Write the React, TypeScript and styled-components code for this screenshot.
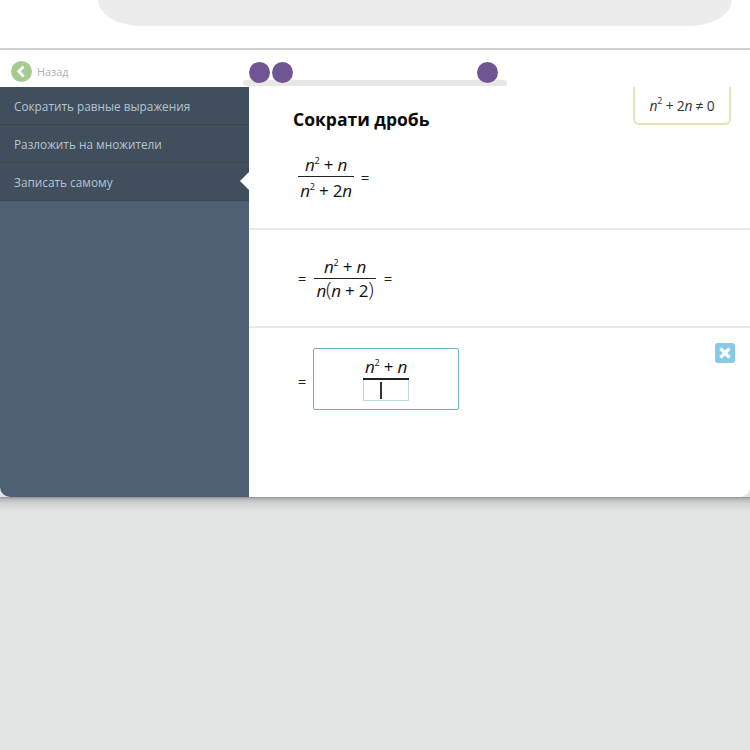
import styled, { createGlobalStyle } from 'styled-components';

const GlobalStyle = createGlobalStyle`
    html, body {
        margin: 0;
        padding: 0;
        background: #e3e5e5;
        font-family: 'Open Sans', 'Liberation Sans', sans-serif;
    }
`;

const Fraction = ({
    top,
    bottom,
    width,
    gap,
}: {
    top: React.ReactNode;
    bottom: React.ReactNode;
    width: number;
    gap: number;
}) => (
    <FractionBox $width={width}>
        <Numerator>{top}</Numerator>
        <Denominator $gap={gap}>{bottom}</Denominator>
    </FractionBox>
);

const NSquared = () => (
    <>
        <Var>n</Var>
        <Sup>2</Sup>
    </>
);

const menuItems = ['Сократить равные выражения', 'Разложить на множители', 'Записать самому'];

const App = () => {
    return (
        <Page>
            <GlobalStyle />
            <Card>
                <TopBar>
                    <Pill />
                </TopBar>
                <NavRow>
                    <BackIcon>
                        <svg width="21" height="21" viewBox="0 0 21 21">
                            <circle cx="10.5" cy="10.5" r="10.5" fill="#a6cb90" />
                            <path d="M12.6 5.6 L7.8 10.5 L12.6 15.4" fill="none" stroke="#fff" strokeWidth="2.8" />
                        </svg>
                    </BackIcon>
                    <BackText>Назад</BackText>
                    <Track>
                        <Dot $left={6} />
                        <Dot $left={29} />
                        <Dot $left={234} />
                    </Track>
                </NavRow>
                <Body>
                    <Sidebar>
                        {menuItems.map((item, i) => (
                            <MenuItem key={item} $active={i === 2}>
                                {item}
                            </MenuItem>
                        ))}
                    </Sidebar>
                    <Content>
                        <HintCard>
                            <NSquared /> + 2<Var>n</Var> ≠ 0
                        </HintCard>
                        <FirstStep>
                            <Title>Сократи дробь</Title>
                            <MathLine>
                                <Fraction
                                    width={56}
                                    gap={3}
                                    top={
                                        <>
                                            <NSquared /> + <Var>n</Var>
                                        </>
                                    }
                                    bottom={
                                        <>
                                            <NSquared /> + 2<Var>n</Var>
                                        </>
                                    }
                                />
                                <Equals>=</Equals>
                            </MathLine>
                        </FirstStep>
                        <SecondStep>
                            <Equals>=</Equals>
                            <Fraction
                                width={62}
                                gap={1}
                                top={
                                    <>
                                        <NSquared /> + <Var>n</Var>
                                    </>
                                }
                                bottom={
                                    <>
                                        <Var>n</Var>
                                        <Paren>(</Paren>
                                        <Var>n</Var> + 2<Paren>)</Paren>
                                    </>
                                }
                            />
                            <Equals>=</Equals>
                        </SecondStep>
                        <ThirdStep>
                            <BoxEquals>=</BoxEquals>
                            <AnswerBox>
                                <AnswerNumerator>
                                    <NSquared /> + <Var>n</Var>
                                </AnswerNumerator>
                                <AnswerInput>
                                    <Caret />
                                </AnswerInput>
                            </AnswerBox>
                            <CloseButton>
                                <svg width="14" height="14" viewBox="0 0 14 14">
                                    <path d="M2.5 2.5 L11.5 11.5 M11.5 2.5 L2.5 11.5" stroke="#fff" strokeWidth="3.2" />
                                </svg>
                            </CloseButton>
                        </ThirdStep>
                    </Content>
                </Body>
            </Card>
            <CardShadow />
        </Page>
    );
};

export default App;

const Page = styled.div`
    width: 750px;
    height: 750px;
    background: #e3e5e5;
    overflow: hidden;
`;

const Card = styled.div`
    width: 750px;
    height: 497px;
    background: #fff;
    border-radius: 0 0 10px 10px;
    display: flex;
    flex-direction: column;
    box-sizing: border-box;
`;

const CardShadow = styled.div`
    height: 14px;
    background: linear-gradient(#8f9293 0, #b5b8b8 2px, #d0d2d2 6px, #e3e5e5 14px);
`;

const TopBar = styled.div`
    height: 50px;
    flex: none;
    box-sizing: border-box;
    border-bottom: 2px solid #cfcfcf;
    padding: 0 18px 0 98px;
`;

const Pill = styled.div`
    height: 26px;
    background: #ececec;
    border-radius: 0 0 44px 44px / 0 0 26px 26px;
`;

const NavRow = styled.div`
    height: 37px;
    flex: none;
    display: flex;
    align-items: flex-start;
    padding: 11px 0 0 11px;
    box-sizing: border-box;
`;

const BackIcon = styled.div`
    width: 21px;
    height: 21px;
    flex: none;

    svg {
        display: block;
    }
`;

const BackText = styled.div`
    margin-left: 5px;
    width: 206px;
    flex: none;
    font-size: 10.8px;
    line-height: 21px;
    color: #adb1b1;
`;

const Track = styled.div`
    position: relative;
    width: 264px;
    height: 6px;
    margin-top: 19px;
    background: #e6e8e3;
    border-radius: 3px;
    flex: none;
`;

const Dot = styled.div<{ $left: number }>`
    position: absolute;
    left: ${(p) => p.$left}px;
    top: -18px;
    width: 21px;
    height: 21px;
    border-radius: 50%;
    background: #6f5592;
`;

const Body = styled.div`
    flex: 1;
    display: flex;
    min-height: 0;
`;

const Sidebar = styled.div`
    width: 249px;
    flex: none;
    background: #4d6074;
    border-radius: 0 0 0 10px;
    display: flex;
    flex-direction: column;
`;

const MenuItem = styled.div<{ $active: boolean }>`
    position: relative;
    height: 38px;
    box-sizing: border-box;
    padding-left: 14px;
    background: #414f5c;
    border-bottom: 1px solid #3a4753;
    color: #b4c3d2;
    font-size: 11.8px;
    line-height: 39px;
    white-space: nowrap;

    ${(p) =>
        p.$active &&
        `
        &::after {
            content: '';
            position: absolute;
            right: 0;
            top: 9px;
            border: 9px solid transparent;
            border-right-color: #fff;
            border-left-width: 0;
        }
    `}
`;

const Content = styled.div`
    position: relative;
    flex: 1;
    display: flex;
    flex-direction: column;
    color: #111;
    font-size: 17px;
    letter-spacing: -0.2px;
    border-radius: 0 0 10px 0;
`;

const HintCard = styled.div`
    position: absolute;
    top: 0;
    left: 384px;
    width: 98px;
    height: 38px;
    box-sizing: border-box;
    border: 2px solid #e6e4ae;
    border-top: none;
    border-radius: 0 0 6px 6px;
    font-size: 13.8px;
    color: #333;
    text-align: center;
    line-height: 38px;
    white-space: nowrap;
`;

const FirstStep = styled.div`
    height: 143px;
    flex: none;
    box-sizing: border-box;
    border-bottom: 2px solid #e8e9e9;
    padding: 20px 0 0 44px;
`;

const Title = styled.div`
    font-size: 17.5px;
    font-weight: 700;
    line-height: 25px;
    letter-spacing: 0;
    color: #0a0a0a;
`;

const MathLine = styled.div`
    display: flex;
    align-items: center;
    gap: 6px;
    margin: 20px 0 0 5px;
`;

const SecondStep = styled.div`
    height: 98px;
    flex: none;
    box-sizing: border-box;
    border-bottom: 2px solid #e8e9e9;
    display: flex;
    align-items: center;
    gap: 7px;
    padding: 1px 0 2px 48px;
`;

const ThirdStep = styled.div`
    position: relative;
    flex: 1;
    display: flex;
    align-items: flex-start;
    gap: 6px;
    padding: 20px 0 0 48px;
`;

const FractionBox = styled.div<{ $width: number }>`
    width: ${(p) => p.$width}px;
    display: flex;
    flex-direction: column;
    align-items: center;
    white-space: nowrap;
    line-height: 22px;
`;

const Numerator = styled.div`
    width: 100%;
    text-align: center;
    border-bottom: 1.5px solid #222;
    padding-top: 2px;
`;

const Denominator = styled.div<{ $gap: number }>`
    text-align: center;
    padding-top: ${(p) => p.$gap}px;
`;

const Var = styled.span`
    font-style: italic;
`;

const Sup = styled.sup`
    font-size: 9px;
    line-height: 0;
    vertical-align: 7px;
`;

const Paren = styled.span`
    font-size: 20px;
    font-weight: 300;
    line-height: 0;
`;

const Equals = styled.span`
    font-size: 15px;
    color: #222;
    width: 10px;
    flex: none;
    text-align: center;
`;

const BoxEquals = styled(Equals)`
    line-height: 66px;
`;

const AnswerBox = styled.div`
    width: 146px;
    height: 62px;
    box-sizing: border-box;
    border: 1px solid #6fb3c4;
    border-radius: 2px;
    display: flex;
    flex-direction: column;
    align-items: center;
    padding-top: 6px;
`;

const AnswerNumerator = styled.div`
    width: 46px;
    text-align: center;
    white-space: nowrap;
    line-height: 23px;
    border-bottom: 2px solid #222;
`;

const AnswerInput = styled.div`
    position: relative;
    width: 46px;
    height: 21px;
    box-sizing: border-box;
    border: 1px solid #bfdcdc;
    border-top: none;
`;

const Caret = styled.div`
    position: absolute;
    left: 16px;
    top: 2px;
    width: 1.5px;
    height: 17px;
    background: #333;
`;

const CloseButton = styled.div`
    position: absolute;
    left: 466px;
    top: 15px;
    width: 20px;
    height: 20px;
    border-radius: 3px;
    background: #85cbe6;
    display: flex;
    align-items: center;
    justify-content: center;
`;
